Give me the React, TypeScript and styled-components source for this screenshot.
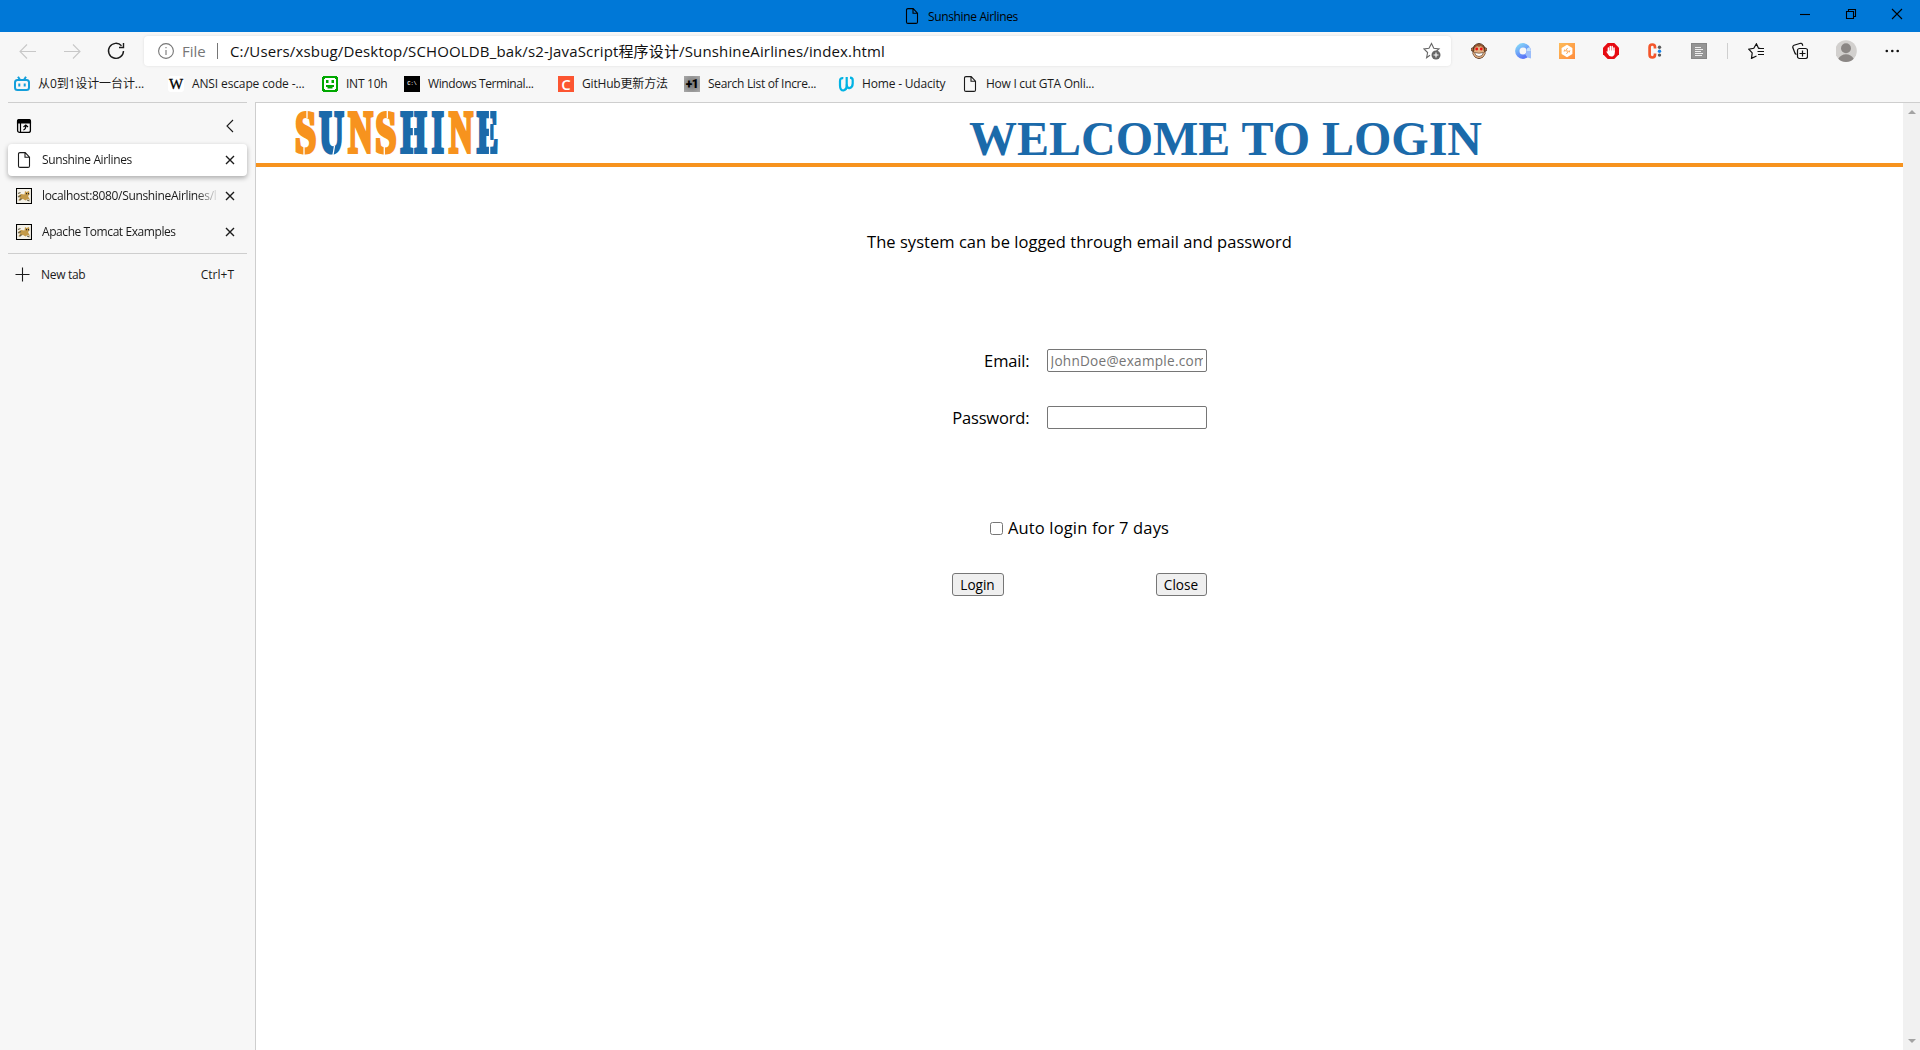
import React from 'react';
import styled, { createGlobalStyle } from 'styled-components';

const ui = `"Open Sans", "Noto Sans CJK SC", sans-serif`;

const GlobalStyle = createGlobalStyle`
  * { box-sizing: border-box; }
  body { margin: 0; overflow: hidden; font-family: ${ui}; color: #1b1b1b; background: #f7f7f7; }
`;

const Window = styled.div`
  width: 1920px; height: 1050px; display: grid; grid-template-rows: 32px 38px 32px 1fr; overflow: hidden;
`;
const Label = styled.span<{ $size?: number; $gap?: number; $color?: string }>`
  font-size: ${p => p.$size ?? 12}px; letter-spacing: ${p => p.$gap ?? 0}px; color: ${p => p.$color ?? 'inherit'};
  white-space: nowrap; line-height: 16px;
`;
const TitleBar = styled.header`
  background: #0078d7; display: grid; grid-template-columns: 1fr auto; align-items: start; color: #000;
`;
const TitleTab = styled.div`
  display: flex; padding: 8px 0 0 904px; gap: 8px;
  ${Label} { padding-top: 1px; }
`;
const Controls = styled.div`
  display: flex; padding: 8px 17px 0 0; gap: 34px;
`;
const Toolbar = styled.nav`
  display: flex; align-items: flex-start; padding: 4px 0 0 18px; background: #f7f7f7;
`;
const NavButtons = styled.div`
  display: flex; gap: 24px; padding-top: 5px; width: 126px;
`;
const Address = styled.div`
  width: 1307px; height: 30px; border-radius: 4px; background: #fff; box-shadow: 0 0 3px #0000001a;
  display: flex; align-items: center; padding: 0 10px 0 14px;
`;
const Divider = styled.i<{ $color: string }>`
  width: 1px; height: 16px; background: ${p => p.$color};
`;
const Scheme = styled.div`
  display: flex; align-items: center; width: 59px; gap: 8px;
`;
const Url = styled.div`flex: 1; display: flex; color: #111; padding: 0 0 0 12px;`;
const Extensions = styled.div`
  display: flex; gap: 28px; padding: 7px 20px 0 20px; align-items: flex-start;
`;
const Tools = styled.div`
  display: flex; gap: 28px; padding: 0 0 0 20px; align-items: center; height: 30px;
`;
const ToolDivider = styled(Divider)`margin-top: 7px;`;
const Bookmarks = styled.nav`
  display: flex; padding: 6px 0 0 14px; background: #f7f7f7;
`;
const Bookmark = styled.a<{ $w: number }>`
  width: ${p => p.$w}px; display: flex; gap: 8px; height: 16px;
`;
const Main = styled.div`display: grid; grid-template-columns: 255px 1fr;`;
const Sidebar = styled.aside`padding-right: 8px; padding-left: 8px; background: #f7f7f7;`;
const SideHead = styled.div`
  height: 42px; border-top: 1px solid #cecece; display: flex; justify-content: space-between; padding: 15px 13px 0 8px;
`;
const Tab = styled.div<{ $active?: boolean }>`
  height: ${p => (p.$active ? 32 : 36)}px; display: grid; grid-template-columns: 26px 183px 10px; align-items: center;
  padding: 0 0 0 8px; border-radius: 4px; background: ${p => (p.$active ? '#fff' : 'transparent')};
  box-shadow: ${p => (p.$active ? '0 2px 5px #00000050' : 'none')}; justify-content: start;
`;
const TabList = styled.div`border-bottom: 1px solid #cecece; height: 110px; display: flex; flex-direction: column;`;
const InactiveTabs = styled.div`padding-top: 2px;`;
const Fade = styled.div`
  display: flex; mask-image: linear-gradient(90deg, #000 154px, transparent 177px);
`;
const NewTab = styled.div`display: flex; align-items: center; height: 42px; padding: 0 13px 0 7px;`;
const Grow = styled.div`flex: 1; display: flex; padding-left: 10px;`;
const Viewport = styled.div`
  border-top: 1px solid #cecece; border-left: 1px solid #cecece; background: #fff;
  display: grid; grid-template-columns: 1fr 17px;
`;
const Page = styled.main`color: #000;`;
const Banner = styled.header`
  height: 64px; border-bottom: 4px solid #f7931e; display: flex; align-items: flex-start;
`;
const Welcome = styled.h1`
  margin: 8px 0 0 468px; font: 700 48px/56px "Liberation Serif", serif; color: #1b6aaa; white-space: nowrap;
`;
const Content = styled.section`
  display: flex; flex-direction: column; align-items: center; padding-right: 1px;
`;
const Intro = styled.p`margin: 63px 0 0 1px; height: 24px; display: flex; align-items: center;`;
const Form = styled.form`width: 255px; display: flex; flex-direction: column;`;
const Field = styled.label<{ $top: number }>`
  height: 23px; margin-top: ${p => p.$top}px; display: flex; align-items: center; justify-content: flex-end; gap: 17px;
`;
const Input = styled.input`
  width: 160px; height: 23px; padding: 1px 3px; border: 1px solid #767676; border-radius: 2px;
  font-family: ${ui}; font-size: 13.6px; letter-spacing: .25px; outline: none;
  &::placeholder { color: #757575; }
`;
const Auto = styled.label`
  margin: 87px 0 0 1px; height: 24px; display: flex; align-items: center; justify-content: center; gap: 5px;
`;
const Check = styled.input`width: 13px; height: 13px; margin: 0;`;
const Actions = styled.div`display: flex; justify-content: space-between; margin-top: 33px;`;
const Button = styled.button<{ $w: number }>`
  width: ${p => p.$w}px; height: 23px; padding: 1px 0 0; border: 1px solid #767676; border-radius: 3px; background: #efefef;
  display: flex; justify-content: center; align-items: center; font-family: ${ui}; color: #000;
`;
const Scrollbar = styled.div`
  background: #f1f1f1; display: flex; flex-direction: column; justify-content: space-between; align-items: center; padding: 6px 0 6px;
`;
const Svg = styled.svg`display: block; flex: none;`;

type IconProps = { w?: number; h?: number; c?: string; children: React.ReactNode };
const Icon = ({ w = 16, h = 16, c = '#1b1b1b', children }: IconProps) => (
  <Svg width={w} height={h} viewBox={`0 0 ${w} ${h}`} fill="none" stroke={c} strokeWidth={1.1}>{children}</Svg>
);
const FileIcon = ({ c = '#1b1b1b' }) => (
  <Icon c={c}><path d="M4 .6h5.2l4.3 4.5v8.8q0 1.5-1.5 1.5H4q-1.5 0-1.5-1.5V2.1Q2.5.6 4 .6ZM9 .8v4.5h4.3" /></Icon>
);
const CloseIcon = () => <Icon w={10} h={10}><path d="M1 1l8 8M9 1L1 9" strokeWidth={1.4} /></Icon>;
const TomcatIcon = () => (
  <Icon><path d="M.5.5h15v15H.5z" fill="#f4f1e8" stroke="#000" />
    <path d="M2 8l3-2 3.500.5L9 3l1.500 1L13 3l.6 3.500-1.600 1.500 2 4-2.500-1-2 1.500L7 11l-5 1.500 2-2.500z" fill="#c49a48" stroke="none" />
    <path d="M2 5.500l2.500-1M2 9l3-1.500M3.500 12.500l2-2M11 12l2.500 1" stroke="#66604c" /><path d="M10 5.600h1M12 5.600h1" stroke="#222" />
  </Icon>
);

/* Each logo letter: glyph, left edge, drawn width, ink width in em, colour */
const logoLetters: [string, number, number, number, string][] = [
  ['S', 0, 21, 0.479, '#f7931e'], ['U', 23.6, 25.7, 0.685, '#1b6aaa'], ['N', 52.6, 25.7, 0.685, '#f7931e'],
  ['S', 80.3, 21, 0.479, '#f7931e'], ['H', 105.3, 26.7, 0.738, '#1b6aaa'], ['I', 136.3, 13, 0.35, '#1b6aaa'],
  ['N', 153.3, 25, 0.685, '#f7931e'], ['E', 181.3, 22, 0.625, '#1b6aaa'],
];
const bearings: Record<string, number> = { S: 0.035, U: 0.016, N: 0.016, H: 0.021, I: 0.02, E: 0.016 };
const LogoSvg = styled.svg`
  margin: 7px 0 0 39px; display: block; flex: none; overflow: visible; font: 700 59px "Liberation Serif", serif;
`;
const Logo = () => (
  <LogoSvg width="206" height="46" viewBox="0 0 206 46">
    {logoLetters.map(([ch, x, w, ink, color], i) => {
      const sx = w / (ink * 59 + 4.2);
      return <text key={i} transform={`translate(${x + (2.1 - bearings[ch] * 59) * sx} 41.7) scale(${sx} 1)`} fill={color} stroke={color} strokeWidth={4.2}>{ch}</text>;
    })}
    <g stroke="#fff" strokeWidth="1.3">
      <path d="M12 0V8M9 37V46M92.300 0V8M89.300 37V46M39.500 36l-1.500 9M118.500 17v9M194.600 0V46" />
    </g>
  </LogoSvg>
);

const TabRow = ({ title, active, gap }: { title: string; active?: boolean; gap: number }) => (
  <Tab $active={active}>
    {active ? <FileIcon /> : <TomcatIcon />}
    <Fade><Label $gap={gap}>{title}</Label></Fade>
    <CloseIcon />
  </Tab>
);

const BiliIcon = () => (
  <Icon c="#139fdb"><path d="M4 .8l2 3M12 .8l-2 3" strokeWidth={2} /><rect x="1" y="4" width="14" height="10" rx="2.500" strokeWidth={2} /><path d="M5.300 7.500v3M10.700 7.500v3" strokeWidth={2} /></Icon>
);
const SerifMark = styled.span`
  width: 16px; height: 16px; background: #fff; border-radius: 3px; font: 400 15px/17px "Liberation Serif", serif; text-align: center; color: #000;
  -webkit-text-stroke: .3px #000;
`;
const SmileIcon = () => (
  <Icon c="#00a800"><path d="M2 1h12v1h1v12h-1v1H2v-1H1V2h1z" strokeWidth={2} fill="#fff" /><path d="M4 4h2.500v3H4zM9.500 4H12v3H9.500zM4 9h8v2h-1.500v1.500h-5V11H4z" fill="#00a800" stroke="none" /></Icon>
);
const CmdMark = styled.span`
  width: 16px; height: 16px; background: #000; color: #ddd; font: 700 5.5px/16px "Liberation Mono", monospace; letter-spacing: -.2px; text-align: center;
`;
const CMark = styled.span`width: 16px; height: 16px; background: #fc5531; color: #fff; font: 600 15px/16px "Open Sans", sans-serif; text-align: center;`;
const PlusMark = styled.span`
  width: 16px; height: 16px; background: radial-gradient(#777, #aaa); color: #000; font: 900 12px/16px Roboto, sans-serif; letter-spacing: -.5px; text-align: center;
`;
const UdacityIcon = () => (
  <Icon c="#02b3e4"><path d="M5.300 2.200Q2 1.800 2 5v4.500q0 5 3.500 5 3.200-.8 3.200-4.500V1" strokeWidth={2.2} /><path d="M8.700 8.500q.2 3.800 2.800 3.600 3.200-.8 3.200-4.600V4q0-2.200-2.700-2.400" strokeWidth={2.2} /></Icon>
);

const MonkeyIcon = () => (
  <Icon>
    <circle cx="2" cy="6.500" r="1.800" fill="#c98a54" stroke="#4a2b1a" strokeWidth={.8} /><circle cx="14" cy="6.500" r="1.800" fill="#c98a54" stroke="#4a2b1a" strokeWidth={.8} />
    <path d="M3 3Q8-2 13 3q1.300 4 1 8-2 4.500-6 4.500T2 11q-.3-4 1-8Z" fill="#9a5a30" stroke="#4a2b1a" strokeWidth={.9} />
    <path d="M3.500 5.500Q6 2 8 4q2-2 4.500 1.500v2l1.500 3Q12 15 8 15t-6-4.500l1.500-3Z" fill="#e2b184" stroke="none" />
    <circle cx="5.700" cy="6" r="1.400" fill="#f01212" stroke="none" /><circle cx="10.300" cy="6" r="1.400" fill="#f01212" stroke="none" />
    <path d="M3.500 9.500q4.500 1.500 9 0-.8 4-4.500 4T3.500 9.500Z" fill="#fff" stroke="#4a2b1a" strokeWidth={.6} />
  </Icon>
);
const RingIcon = () => (
  <Icon>
    <defs><linearGradient id="ring" x1="0" y1="0" x2=".6" y2="1"><stop stopColor="#83d3f8" /><stop offset="1" stopColor="#5b78f7" /></linearGradient></defs>
    <circle cx="8" cy="8" r="5.700" stroke="url(#ring)" strokeWidth={4.4} />
    <path d="M11.500 8H16v7.500l-3.500-1-2.500-3.500q1.500-1 1.500-3Z" fill="#9bbdfa" stroke="none" />
    <path d="M12 5.500l2.500-1.500L16 8h-4.300Z" fill="#c3e2fc" stroke="none" />
  </Icon>
);
const HexIcon = () => (
  <Icon>
    <defs><linearGradient id="hex" x1="0" y1="0" x2="1" y2="1"><stop stopColor="#fdbb58" /><stop offset="1" stopColor="#ff8c3d" /></linearGradient></defs>
    <path d="M0 0h16v16H0z" fill="url(#hex)" stroke="none" />
    <path d="M8 1.800l5.400 3.100v6.200L8 14.200l-5.400-3.100V4.900Z" fill="#fff" stroke="none" />
    <path d="M8.600 5L6.500 8h3L7.400 11M5.700 6.500l-.6 2.200M10.900 7.300l-.7 2.200" stroke="#fba24c" strokeWidth={.9} />
  </Icon>
);
const HandIcon = () => (
  <Icon>
    <path d="M4.700 0h6.600L16 4.700v6.600L11.300 16H4.700L0 11.300V4.700Z" fill="#e60b12" stroke="none" />
    <path d="M5.400 9V5M7.300 8V3.500M9.200 8V3.500M11 9V5" stroke="#fff" strokeWidth={1.5} strokeLinecap="round" />
    <path d="M4.700 7.500h7v3.200q-.6 2.800-3.500 2.800-2.200 0-3-2L3.300 8.700q.8-.8 1.500.3Z" fill="#fff" stroke="none" />
  </Icon>
);
const DotsCIcon = () => (
  <Icon>
    <path d="M8 5.500V4.200Q8 1.500 5.300 1.500T2.600 4.200v7.600q0 2.700 2.700 2.700T8 11.800V10.500" stroke="#f4562b" strokeWidth={2.700} />
    <circle cx="12.500" cy="4.300" r="1.700" fill="#5b5b5b" stroke="none" /><circle cx="12.500" cy="8.200" r="1.700" fill="#1683e8" stroke="none" /><circle cx="12.500" cy="12.100" r="1.700" fill="#5b5b5b" stroke="none" />
  </Icon>
);
const ReaderIcon = () => (
  <Icon><path d="M0 0h16v16H0z" fill="#959595" stroke="none" /><path d="M.5.500h15v15H.5z" stroke="#868686" /><path d="M4 4.500h6M4 6.500h8M4 8.500h6M4 10.500h8M4 12.500h7" stroke="#eee" /></Icon>
);

const bookmarks: [React.ReactNode, string, number, number][] = [
  [<BiliIcon />, '从0到1设计一台计...', 154, -0.1],
  [<SerifMark>W</SerifMark>, 'ANSI escape code -...', 154, -0.13],
  [<SmileIcon />, 'INT 10h', 82, -0.25],
  [<CmdMark>C:\</CmdMark>, 'Windows Terminal...', 154, -0.4],
  [<CMark>C</CMark>, 'GitHub更新方法', 126, -0.18],
  [<PlusMark>+1</PlusMark>, 'Search List of Incre...', 154, -0.32],
  [<UdacityIcon />, 'Home - Udacity', 124, -0.18],
  [<FileIcon />, 'How I cut GTA Onli...', 154, -0.27],
];

export default function App() {
  return (
    <Window>
      <GlobalStyle />
      <TitleBar>
        <TitleTab><FileIcon c="#000" /><Label $gap={-0.36}>Sunshine Airlines</Label></TitleTab>
        <Controls>
          <Icon w={12} h={12} c="#000"><path d="M1 6.500h10" /></Icon>
          <Icon w={12} h={12} c="#000"><path d="M1.500 3.500h7v7h-7zM3.500 3.500v-2h7v7h-2" /></Icon>
          <Icon w={12} h={12} c="#000"><path d="M1 1l10 10M11 1L1 11" /></Icon>
        </Controls>
      </TitleBar>
      <Toolbar>
        <NavButtons>
          <Icon w={20} h={20} c="#c8c8c8"><path d="M18 10.500H2.500M9 3.500L2 10.500l7 7" /></Icon>
          <Icon w={20} h={20} c="#c8c8c8"><path d="M2 10.500h15.500M11 3.500l7 7-7 7" /></Icon>
          <Icon w={20} h={20}><path d="M17.500 10a7.500 7.500 0 1 1-2-5.300M17.500 2v4.500H13" strokeWidth={1.400} /></Icon>
        </NavButtons>
        <Address>
          <Scheme>
            <Icon c="#767676"><circle cx="8" cy="8" r="7.400" /><path d="M8 7v5M8 4v1.300" /></Icon>
            <Label $size={15} $color="#767676">File</Label>
          </Scheme>
          <Divider $color="#767676" />
          <Url><Label $size={15} $gap={0.15}>C:/Users/xsbug/Desktop/SCHOOLDB_bak/s2-JavaScript程序设计/SunshineAirlines/index.html</Label></Url>
          <Icon w={18} h={18} c="#666">
            <path d="M7 13.300L3.600 15.800 4.600 10.500.9 6.900 6 6.200 8.500 1.500 10.800 6.200 16 6.900 13.500 9" />
            <circle cx="13" cy="13" r="4.500" fill="#666" stroke="none" /><path d="M13 10.500v5M10.500 13h5" stroke="#fff" />
          </Icon>
        </Address>
        <Extensions><MonkeyIcon /><RingIcon /><HexIcon /><HandIcon /><DotsCIcon /><ReaderIcon /></Extensions>
        <ToolDivider $color="#cfcfcf" />
        <Tools>
          <Icon c="#111"><path d="M8.500 13L3.500 15.400 4.200 9.900.8 6.200l5-.9L8.400.800l2 4.200 1.600.4M10 5.500h6M9.500 8.500H16M10 11.500h6" strokeWidth={1.200} /></Icon>
          <Icon w={16} h={18} c="#111">
            <path d="M4.500 12.500Q3 12 2.500 10L.8 5.500Q.5 4 2 3.300L8.500 1.300q1.300-.3 1.800 1l.5 1.500" strokeWidth={1.200} />
            <rect x="5.500" y="6.500" width="10" height="10" rx="2" strokeWidth={1.200} /><path d="M10.500 8.500v6M7.500 11.500h6" strokeWidth={1.200} />
          </Icon>
          <Icon w={21} h={22} c="none">
            <circle cx="10" cy="11" r="10.800" fill="#d2d0ce" /><circle cx="10" cy="8.300" r="5" fill="#8b8785" />
            <path d="M2.300 18.800Q5 14.300 10 14.300t7.700 4.500Q14.500 22 10 22t-7.700-3.200Z" fill="#8b8785" />
          </Icon>
          <Icon w={14} h={14} c="none"><circle cx="1.800" cy="7" r="1.300" fill="#111" /><circle cx="7.300" cy="7" r="1.300" fill="#111" /><circle cx="12.700" cy="7" r="1.300" fill="#111" /></Icon>
        </Tools>
      </Toolbar>
      <Bookmarks>
        {bookmarks.map(([icon, text, w, gap]) => <Bookmark key={text} $w={w}>{icon}<Label $gap={gap}>{text}</Label></Bookmark>)}
      </Bookmarks>
      <Main>
        <Sidebar>
          <SideHead>
            <Icon c="#000"><rect x="1.600" y="1.600" width="12.800" height="12.800" rx="2" strokeWidth={1.300} /><path d="M1.500 5V3q0-1.500 1.500-1.500h10q1.500 0 1.500 1.500v2Z" fill="#000" /><path d="M4.500 5v9M7.300 12q2.500-.5 2.500-4.500M7.500 9l2.300-2 2.200 2" strokeWidth={1.200} /></Icon>
            <Icon w={8} h={16}><path d="M7 2L1 8l6 6" /></Icon>
          </SideHead>
          <TabList>
            <TabRow title="Sunshine Airlines" active gap={-0.36} />
            <InactiveTabs>
              <TabRow title="localhost:8080/SunshineAirlines/l" gap={-0.34} />
              <TabRow title="Apache Tomcat Examples" gap={-0.42} />
            </InactiveTabs>
          </TabList>
          <NewTab>
            <Icon><path d="M7.500 .5v14M.5 7.500h14" /></Icon>
            <Grow><Label $gap={-0.3}>New tab</Label></Grow><Label>Ctrl+T</Label>
          </NewTab>
        </Sidebar>
        <Viewport>
          <Page>
            <Banner><Logo /><Welcome>WELCOME TO LOGIN</Welcome></Banner>
            <Content>
              <Intro><Label $size={16.5} $gap={0.04}>The system can be logged through email and password</Label></Intro>
              <Form>
                <Field $top={95}><Label $size={16.5} $gap={-0.15}>Email:</Label><Input placeholder="JohnDoe@example.com" /></Field>
                <Field $top={34}><Label $size={16.5} $gap={-0.15}>Password:</Label><Input type="password" /></Field>
                <Auto><Check type="checkbox" /><Label $size={16.5} $gap={0.16}>Auto login for 7 days</Label></Auto>
                <Actions><Button type="button" $w={52}><Label $size={13.6}>Login</Label></Button><Button type="button" $w={51}><Label $size={13.6}>Close</Label></Button></Actions>
              </Form>
            </Content>
          </Page>
          <Scrollbar>
            <Icon w={8} h={6} c="none"><path d="M4 1l4 4H0z" fill="#a3a3a3" /></Icon>
            <Icon w={8} h={6} c="none"><path d="M4 5l4-4H0z" fill="#a3a3a3" /></Icon>
          </Scrollbar>
        </Viewport>
      </Main>
    </Window>
  );
}
